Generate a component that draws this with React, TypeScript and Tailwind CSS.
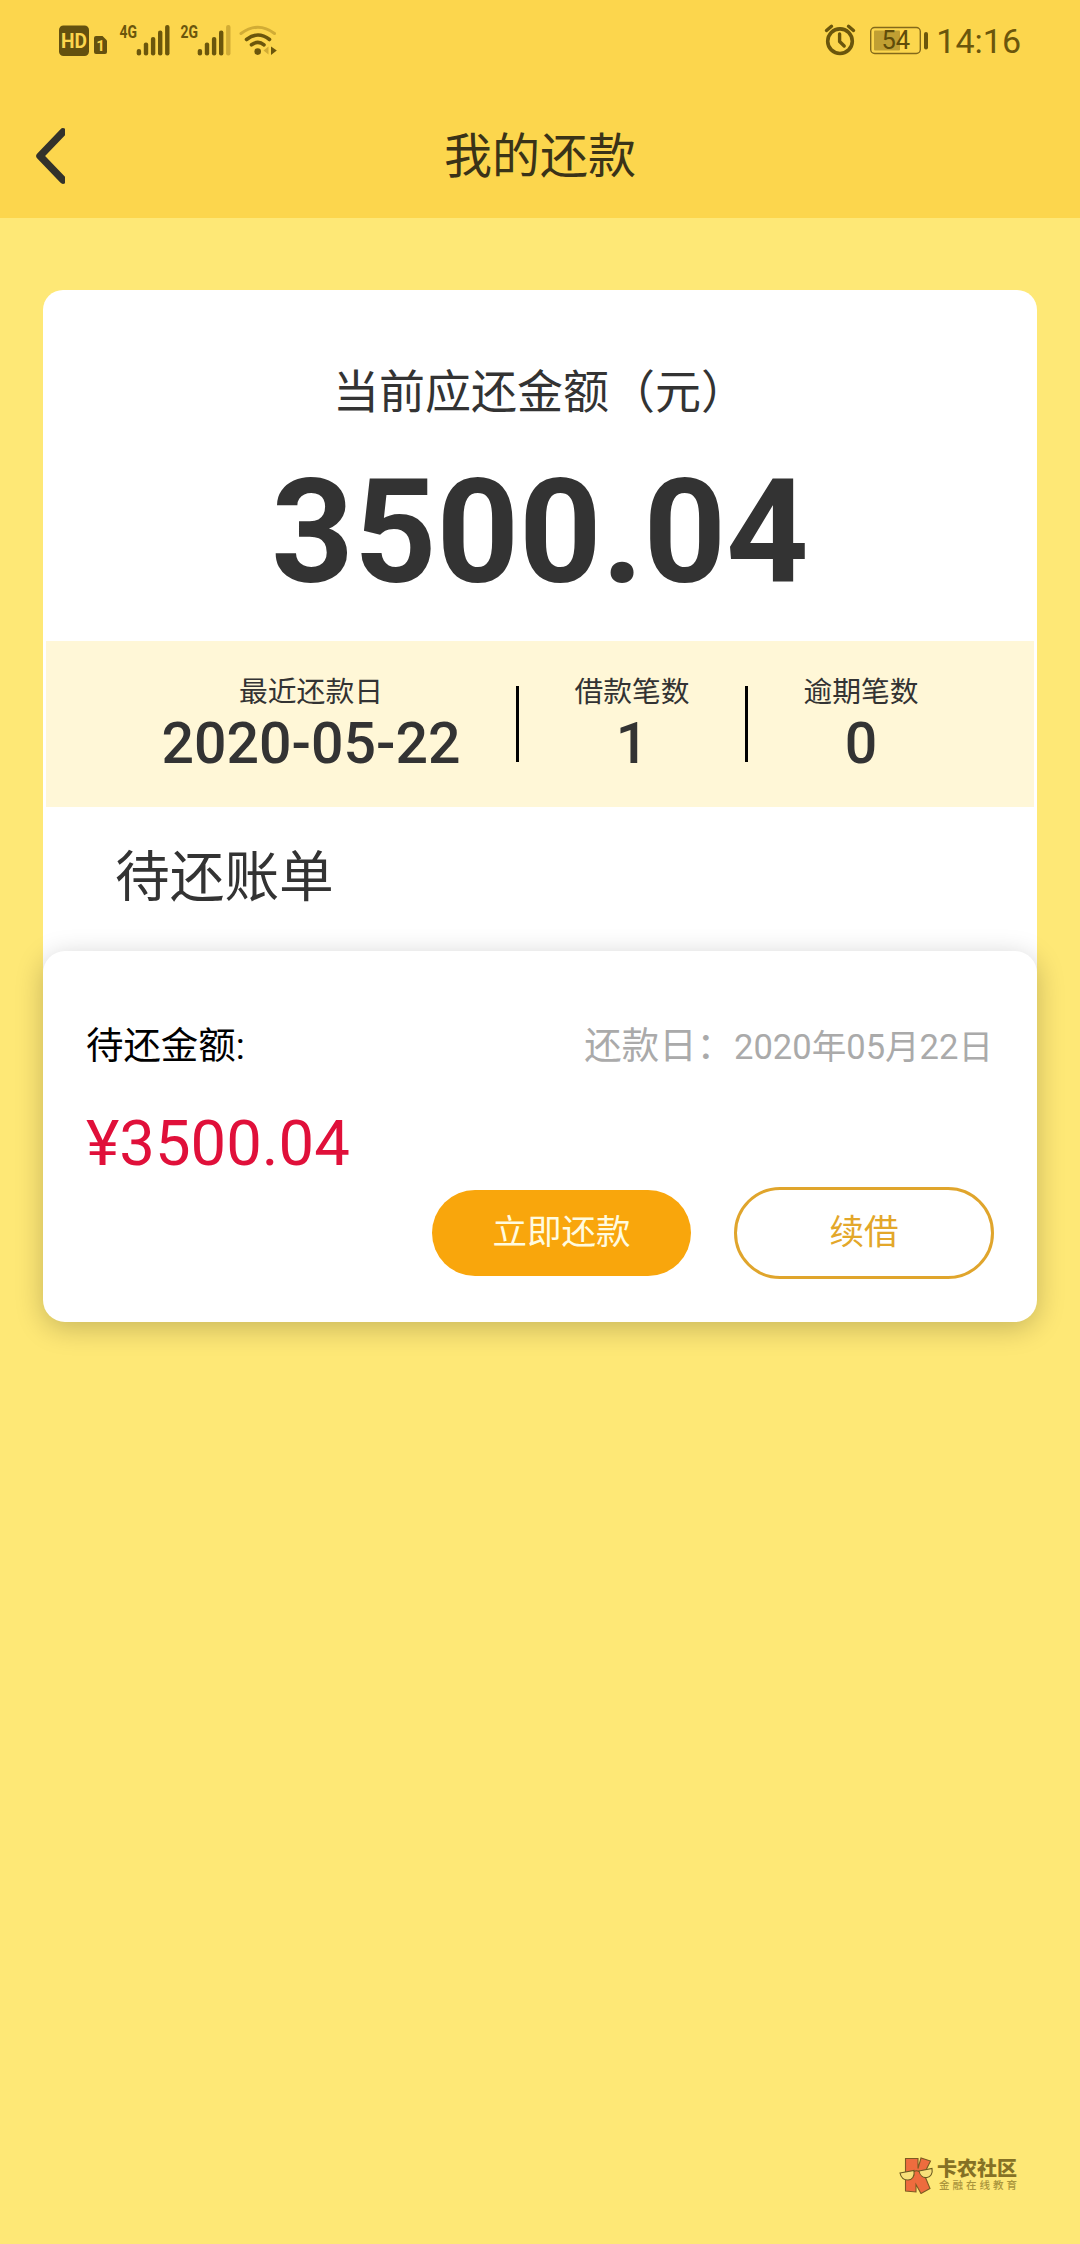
const stats = [
  { label: "最近还款日", value: "2020-05-22", width: "w-[410px]" },
  { label: "借款笔数", value: "1", width: "w-[226px]" },
  { label: "逾期笔数", value: "0", width: "w-[226px]" },
];

const barTops = [49, 42.5, 37, 30.5, 25];

function Signal({ label, weak }: { label: string; weak?: boolean }) {
  return (
    <svg className="block shrink-0" width="54" height="80" viewBox="0 0 54 80">
      <text
        x="1.5"
        y="38.2"
        fontSize="18.5"
        fontWeight="700"
        fill="#6b560c"
        textLength="17.5"
        lengthAdjust="spacingAndGlyphs"
      >
        {label}
      </text>
      {barTops.map((top, i) => (
        <rect
          key={top}
          x={18.7 + i * 7.1}
          y={top}
          width="4.4"
          height={55.5 - top}
          rx="2.1"
          fill={weak && i === 4 ? "#d1ac35" : "#6b560c"}
        />
      ))}
    </svg>
  );
}

function StatusBar() {
  return (
    <div className="flex h-20 justify-between pl-[58px] pr-[59px]">
      <div className="flex">
        {/* HD + SIM */}
        <svg className="block shrink-0" width="60" height="80" viewBox="0 0 60 80">
          <rect x="1" y="25.5" width="30" height="30.5" rx="4.5" fill="#64510f" />
          <text
            x="3"
            y="47.8"
            fontSize="19.5"
            fontWeight="700"
            fill="#fcd64d"
            textLength="26"
            lengthAdjust="spacingAndGlyphs"
          >
            HD
          </text>
          <path
            d="M38 36h6.500l4.500 4.500v11.500a2 2 0 0 1-2 2h-9a2 2 0 0 1-2-2v-14a2 2 0 0 1 2-2z"
            fill="#64510f"
          />
          <text x="38.2" y="50.8" fontSize="15" fontWeight="700" fill="#fcd64d">
            1
          </text>
        </svg>
        <Signal label="4G" />
        <svg className="block shrink-0" width="7" height="80" />
        <Signal label="2G" weak />
        {/* Wi-Fi */}
        <svg className="block shrink-0" width="50" height="80" viewBox="233 0 50 80" fill="none">
          <g strokeLinecap="round">
            <path d="M241 33.500Q258 21 274.500 33.500" stroke="#d1ac35" strokeWidth="3" />
            <path d="M246.500 39.500Q258 30.500 269.500 39.500" stroke="#6b560c" strokeWidth="3.600" />
            <path d="M251.500 44.800Q258 39.800 264 44.800" stroke="#6b560c" strokeWidth="3.600" />
          </g>
          <circle cx="257.7" cy="51.6" r="3.3" fill="#6b560c" />
          <path d="M268.500 46.500v8l-5-4z" fill="#d1ac35" />
          <path d="M271 46.500v8.500l5.800-4.500z" fill="#6b560c" />
        </svg>
      </div>

      <div className="flex">
        {/* Alarm */}
        <svg
          className="block shrink-0"
          width="44"
          height="80"
          viewBox="824 0 44 80"
          fill="none"
          stroke="#6b560c"
        >
          <circle cx="840" cy="41.200" r="12.300" strokeWidth="3.600" />
          <path d="M839.600 34v7.500l4.600 4.500" strokeWidth="3.400" strokeLinecap="round" strokeLinejoin="round" />
          <path d="M826.500 30.500l5-4.200M853.500 30.500l-5-4.200" strokeWidth="3.400" strokeLinecap="round" />
        </svg>
        {/* Battery */}
        <svg className="block shrink-0" width="68" height="80" viewBox="868 0 68 80">
          <rect x="870.700" y="27.500" width="49.600" height="26" rx="4" fill="none" stroke="#83691a" strokeWidth="1.400" />
          <rect x="874" y="30.500" width="26" height="20" rx="1" fill="#c09f33" />
          <rect x="924" y="32" width="4" height="17.500" rx="2" fill="#6b560c" />
          <text x="881.500" y="49.300" fontSize="25.500" fill="#5f4c0a">
            54
          </text>
        </svg>
        <span className="h-20 whitespace-nowrap text-[34px] leading-[82px] text-[#6b560c]">14:16</span>
      </div>
    </div>
  );
}

function Watermark() {
  return (
    <div className="flex h-[38px] gap-[2px]">
      <svg className="block shrink-0" width="36" height="38" viewBox="0 0 36 38">
        <path
          d="M6.500 2.500h12.500v10l3-10.500 9.500 3-6.500 13 6 14.500-9 5-5-9v7.500l-10.500-1z"
          fill="#ee6c3e"
          stroke="#7d5a22"
          strokeWidth="1.100"
        />
        <g fill="#f8e07a" stroke="#6b5a20" strokeWidth="1.100">
          <path d="M1 17l14-2.500c1 6-2 9.500-6 9.500s-7-2-8-7z" />
          <path d="M20 15l13-2.500c1 5-1.500 8.500-5 9s-7-1.500-8-6.500z" />
          <path d="M15 15.500q2.500-1.500 5 0" fill="none" />
        </g>
      </svg>
      <div className="pt-[2px]">
        <div className="text-[20px] font-black leading-[22px] text-[#857125]">卡农社区</div>
        <div className="pl-[2px] text-[10.500px] font-medium leading-[12px] tracking-[3px] text-[#aa953c]">
          金融在线教育
        </div>
      </div>
    </div>
  );
}

export default function App() {
  return (
    <main className="flex h-[2244px] w-[1080px] flex-col bg-[#fee876] font-[Roboto,'Noto_Sans_CJK_SC',sans-serif] text-[#333333]">
      <header className="h-[218px] bg-[#fcd64d]">
        <StatusBar />
        <div className="flex h-[138px] items-start pt-[47px]">
          <svg className="ml-[35px] mt-px block" width="30" height="56" viewBox="0 0 30 56" fill="none">
            <path d="M28 4L5 28l23 24" stroke="#33322b" strokeWidth="7.500" strokeLinecap="round" strokeLinejoin="round" />
          </svg>
          <h1 className="mr-[65px] grow text-center text-[48px] leading-[60px] text-[#3a3318]">我的还款</h1>
        </div>
      </header>

      {/* Total due */}
      <section className="mx-[43px] mt-[72px] h-[683px] rounded-t-[20px] bg-white">
        <div className="flex h-[351px] flex-col items-center pt-[72px]">
          <div className="text-[46px] leading-[60px]">当前应还金额（元）</div>
          <div className="mt-[27px] text-[144px] font-bold leading-[168px]">3500.04</div>
        </div>
        <div className="mx-[3px] flex h-[166px] items-center justify-center bg-[#fff7d7]">
          {stats.map((stat, i) => (
            <div key={stat.label} className="flex items-center">
              {i > 0 && <div className="h-[76px] w-[3px] bg-black" />}
              <div className={`flex flex-col items-center pt-[3px] ${stat.width}`}>
                <div className="text-[28.800px] leading-[36px]">{stat.label}</div>
                <div className="text-[57.200px] font-medium leading-[67px]">{stat.value}</div>
              </div>
            </div>
          ))}
        </div>
        <h2 className="pl-[72px] pt-[34px] text-[54.700px] leading-[72px]">待还账单</h2>
      </section>

      {/* Bill */}
      <section className="relative mx-[43px] -mt-[22px] h-[371px] rounded-[22px] bg-white px-[43px] pt-[66px] shadow-[0_6px_28px_rgba(0,0,0,0.22)]">
        <div className="flex h-[58px] items-center justify-between">
          <div className="text-[37.440px] text-black">待还金额:</div>
          <div className="pr-px text-[34.560px] text-[#aaaaaa]">
            <span className="text-[37.440px]">还款日：</span>2020年05月22日
          </div>
        </div>
        <div className="mt-[30px] h-[76px] text-[63.400px] leading-[76px] text-[#e0103a]">¥3500.04</div>
        <div className="mt-[6px] flex h-[92px] items-center justify-end gap-[43px]">
          <button className="h-[86px] w-[259px] rounded-full bg-[#f9a60c] pb-px text-[34.560px] text-[#fffbe0]">
            立即还款
          </button>
          <button className="h-[92px] w-[260px] rounded-full border-[3px] border-[#e0a52c] pb-px text-[34.560px] text-[#e3a72a]">
            续借
          </button>
        </div>
      </section>

      <footer className="mt-auto flex justify-end pb-[50px] pr-[60px]">
        <Watermark />
      </footer>
    </main>
  );
}
